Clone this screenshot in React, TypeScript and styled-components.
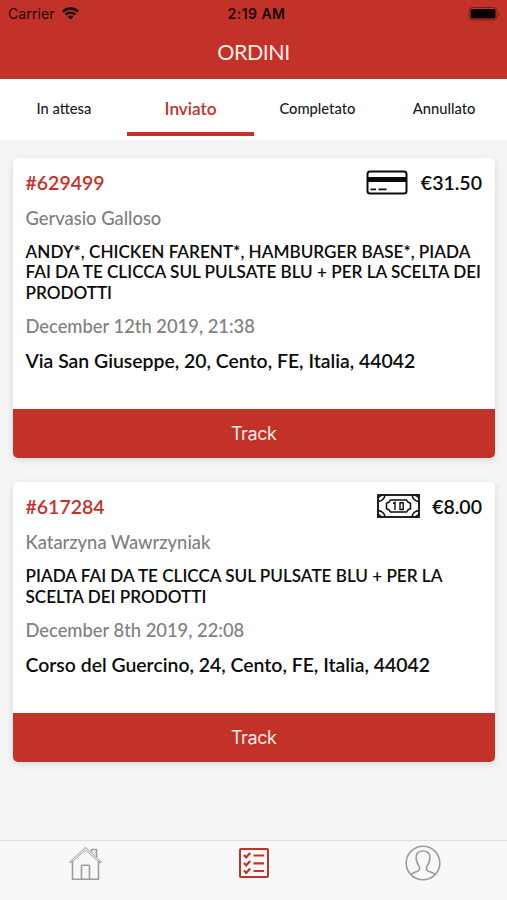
import React from "react";
import styled, { createGlobalStyle } from "styled-components";

const RED = "#c23229";

const GlobalStyle = createGlobalStyle`
  *, *::before, *::after { box-sizing: border-box; }
  body { margin: 0; background: #f5f5f5; }
`;

const Screen = styled.div`
  width: 507px;
  height: 900px;
  display: flex;
  flex-direction: column;
  overflow: hidden;
  background: #f5f5f5;
  color: #0c0c0c;
  font-family: Lato, sans-serif;
`;

const Header = styled.header`
  height: 79px;
  flex: none;
  background: ${RED};
`;

const StatusBar = styled.div`
  height: 27px;
  padding: 0 7px 0 8px;
  display: grid;
  grid-template-columns: 1fr auto 1fr;
  align-items: center;
  color: #170403;
  font-family: Inter, sans-serif;
  font-size: 14px;
`;

const Carrier = styled.div`
  display: flex;
  align-items: center;
  gap: 7px;
  letter-spacing: 0.1px;
`;

const Clock = styled.div`
  font-weight: 600;
  font-size: 14px;
  letter-spacing: 0.45px;
  padding-left: 5px;
`;

const BatterySlot = styled.div`
  display: flex;
  justify-content: flex-end;
`;

const Title = styled.h1`
  margin: 0;
  height: 50px;
  line-height: 50px;
  text-align: center;
  color: #fbe9e7;
  font-size: 21.5px;
  letter-spacing: -0.5px;
  font-weight: 400;
`;

const Tabs = styled.nav`
  height: 61px;
  flex: none;
  display: grid;
  grid-template-columns: repeat(4, 1fr);
  background: #fff;
`;

const Tab = styled.div<{ $active?: boolean }>`
  height: 57px;
  line-height: 59px;
  padding-left: 1px;
  border-bottom: 4px solid ${(p) => (p.$active ? RED : "transparent")};
  text-align: center;
  color: ${(p) => (p.$active ? RED : "#1c1c1c")};
  font-size: ${(p) => (p.$active ? "17.2px" : "14.7px")};
  font-weight: ${(p) => (p.$active ? 600 : 500)};
`;

const OrderList = styled.main`
  flex: 1;
  padding: 18px 12.5px 0 13px;
  display: flex;
  flex-direction: column;
  gap: 24.5px;
`;

const Card = styled.article`
  border-radius: 5px;
  background: #fff;
  box-shadow: 0 2px 7px rgba(0, 0, 0, 0.13);
`;

const CardBody = styled.div`
  padding: 11px 12.5px 36px 12.5px;
`;

const TopRow = styled.div`
  height: 26px;
  display: flex;
  align-items: center;
  justify-content: space-between;
  font-size: 19.5px;
`;

const OrderId = styled.span`
  color: ${RED};
  font-weight: 600;
`;

const Payment = styled.span`
  display: flex;
  align-items: center;
  gap: 12.5px;
  font-weight: 600;
`;

const Muted = styled.div`
  margin-top: 10.5px;
  height: 24px;
  line-height: 24px;
  font-size: 18.35px;
  font-weight: 500;
  color: #808080;
`;

const Products = styled.div`
  margin-top: 12.5px;
  line-height: 20.4px;
  font-size: 17.13px;
  font-weight: 600;
  white-space: nowrap;
`;

const Address = styled.div`
  margin-top: 11px;
  height: 24px;
  line-height: 24px;
  font-size: 19.4px;
  font-weight: 600;
  white-space: nowrap;
`;

const TrackButton = styled.button`
  display: block;
  width: 100%;
  height: 49px;
  padding: 0;
  border: 0;
  border-radius: 0 0 5px 5px;
  background: ${RED};
  color: #fbe9e7;
  font-family: Inter, sans-serif;
  font-size: 18px;
  letter-spacing: -0.4px;
`;

const BottomBar = styled.footer`
  height: 60px;
  flex: none;
  display: grid;
  grid-template-columns: repeat(3, 1fr);
  justify-items: center;
  align-items: center;
  padding: 0 0 15px 1px;
  border-top: 1px solid #dedede;
  background: #f8f8f8;
`;

const WifiIcon = () => (
  <svg width="17" height="13" viewBox="0 0 17 13" fill="none" stroke="currentColor" strokeWidth="2.4">
    <path d="M0.9 4.6C5.1.5 11.900.5 16.100 4.600M3.600 7.600C6.400 4.900 10.600 4.900 13.400 7.600" />
    <path d="M8.500 12.400 5.600 9.500C7.300 8 9.700 8 11.400 9.500Z" fill="currentColor" stroke="none" />
  </svg>
);

const BatteryIcon = () => (
  <svg width="32" height="14" viewBox="0 0 32 14">
    <rect x="1" y="0.500" width="28" height="12.500" rx="3.500" fill="none" stroke="#7d1f19" />
    <rect x="2.500" y="2" width="25" height="9.500" rx="1.800" fill="#090000" />
    <path d="M30.500 4.500q1.800 2.200 0 4.500Z" fill="#7d1f19" />
  </svg>
);

const CreditCardIcon = () => (
  <svg width="42" height="25" viewBox="0 0 42 25" fill="none" stroke="#0c0c0c" strokeWidth="2">
    <rect x="1.500" y="1.500" width="39" height="22" rx="2.500" />
    <path d="M1.500 9.500h39" strokeWidth="5.200" />
    <path d="M4.500 19.300h5.500M12.500 19.300h8" strokeWidth="1.700" />
  </svg>
);

const BanknoteIcon = () => (
  <svg width="43" height="24" viewBox="0 0 43 24" fill="none" stroke="#0c0c0c" strokeWidth="1.500">
    <rect x="1" y="1" width="41" height="22" strokeWidth="1.800" />
    <path d="M8 1C7.500 4.800 5 7 1 7.500M35 1C35.500 4.800 38 7 42 7.500M1 16.500C5 17 7.500 19.200 8 23M42 16.500C38 17 35.500 19.200 35 23" />
    <path d="M5 1 1 4M38 1l4 3M1 20l4 3M42 20l-4 3" strokeWidth="1.100" />
    <path d="M13.500 6h16q1 2.700 4 3.200v5.600q-3 .5-4 3.200h-16q-1-2.700-4-3.200V9.200q3-.5 4-3.200Z" />
    <path d="M16 9.500l2-1v7.500M23 8.800h3.200v6.700H23Z" strokeWidth="1.400" />
  </svg>
);

const HomeIcon = () => (
  <svg width="35" height="36" viewBox="0 0 35 36" fill="none" stroke="#9d9d9d" strokeWidth="1.600" strokeLinejoin="round">
    <path d="M4.500 15.500v18.700h26V15.500" />
    <path d="M1.500 17 17.500 2.500l16 14.500-1.500 1L17.500 5 3 18Z" strokeWidth="1" />
    <path d="M23.500 7V4.500h5V12M13.500 34V21.500q0-1.200 1.200-1.200h5.600q1.200 0 1.200 1.200V34" />
  </svg>
);

const OrdersIcon = () => (
  <svg width="30" height="30" viewBox="0 0 30 30" fill="none" stroke={RED} strokeWidth="2">
    <rect x="1" y="1" width="28" height="28" rx="1" />
    <path d="M5 7l2.200 2.300L11.200 5M5 15l2.200 2.300 4-4.300M5 22.500l2.200 2.300 4-4.300M14.500 7.500H25M14.500 15.300H25M14.500 23H25" strokeWidth="2.200" />
  </svg>
);

const ProfileIcon = () => (
  <svg width="36" height="36" viewBox="0 0 36 36" fill="none" stroke="#9d9d9d" strokeWidth="1.600">
    <circle cx="18" cy="18" r="16.800" />
    <path d="M5.700 29.500C8 27.500 11.500 27 13.300 25.800C15 24.500 14.500 22 13.500 20.200C11.500 17.500 11 15 11.200 11.500C11.500 7.500 13.500 6 18 6S24.500 7.500 24.800 11.500C25 15 24.500 17.500 22.500 20.200C21.500 22 21 24.500 22.700 25.800C24.500 27 28 27.500 30.300 29.500" />
  </svg>
);

interface Order {
  id: string;
  price: string;
  customer: string;
  products: string[];
  date: string;
  address: string;
  card?: boolean;
}

const orders: Order[] = [
  {
    id: "#629499",
    price: "€31.50",
    customer: "Gervasio Galloso",
    products: [
      "ANDY*, CHICKEN FARENT*, HAMBURGER BASE*, PIADA",
      "FAI DA TE CLICCA SUL PULSATE BLU + PER LA SCELTA DEI",
      "PRODOTTI",
    ],
    date: "December 12th 2019, 21:38",
    address: "Via San Giuseppe, 20, Cento, FE, Italia, 44042",
    card: true,
  },
  {
    id: "#617284",
    price: "€8.00",
    customer: "Katarzyna Wawrzyniak",
    products: ["PIADA FAI DA TE CLICCA SUL PULSATE BLU + PER LA", "SCELTA DEI PRODOTTI"],
    date: "December 8th 2019, 22:08",
    address: "Corso del Guercino, 24, Cento, FE, Italia, 44042",
  },
];

const OrderCard = ({ order }: { order: Order }) => (
  <Card>
    <CardBody>
      <TopRow>
        <OrderId>{order.id}</OrderId>
        <Payment>
          {order.card ? <CreditCardIcon /> : <BanknoteIcon />}
          <span>{order.price}</span>
        </Payment>
      </TopRow>
      <Muted>{order.customer}</Muted>
      <Products>
        {order.products.map((line) => (
          <div key={line}>{line}</div>
        ))}
      </Products>
      <Muted>{order.date}</Muted>
      <Address>{order.address}</Address>
    </CardBody>
    <TrackButton>Track</TrackButton>
  </Card>
);

export default function App() {
  return (
    <Screen>
      <GlobalStyle />
      <Header>
        <StatusBar>
          <Carrier>
            <span>Carrier</span>
            <WifiIcon />
          </Carrier>
          <Clock>2:19 AM</Clock>
          <BatterySlot>
            <BatteryIcon />
          </BatterySlot>
        </StatusBar>
        <Title>ORDINI</Title>
      </Header>
      <Tabs>
        <Tab>In attesa</Tab>
        <Tab $active>Inviato</Tab>
        <Tab>Completato</Tab>
        <Tab>Annullato</Tab>
      </Tabs>
      <OrderList>
        {orders.map((order) => (
          <OrderCard key={order.id} order={order} />
        ))}
      </OrderList>
      <BottomBar>
        <HomeIcon />
        <OrdersIcon />
        <ProfileIcon />
      </BottomBar>
    </Screen>
  );
}
